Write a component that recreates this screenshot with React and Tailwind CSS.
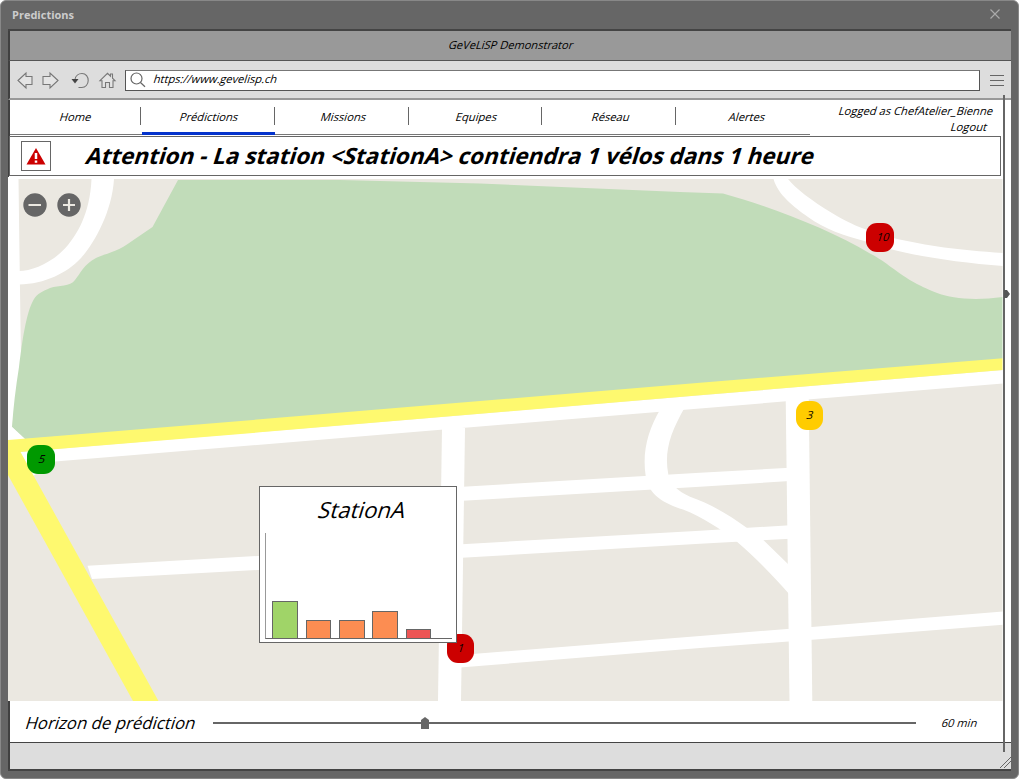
const slant = "inline-block whitespace-pre -skew-x-[17deg]";

function Tab({ label, active, last }) {
  return (
    <div className={`relative flex items-start justify-center pt-[8px] ${last ? "flex-1 pl-[5px]" : "w-[133.7px] pr-[2px]"}`}>
      <span className={`${slant} text-[11.2px] leading-[18px]`}>{label}</span>
      {!last && <span className="absolute right-[2.500px] top-[7px] h-[18px] w-px bg-[#666]" />}
      {active && <span className="absolute -bottom-px -left-[1.700px] h-[3px] w-[133px] bg-[#0433cc]" />}
    </div>
  );
}

const bikes = [
  { count: "10", place: "left-[858px] top-[45px] bg-[#cc0000] pl-[6px]" },
  { count: "3", place: "left-[787.5px] top-[223px] bg-[#ffcc00]" },
  { count: "5", place: "left-[19px] top-[266.5px] bg-[#009900]" },
  { count: "1", place: "left-[438.7px] top-[456px] bg-[#cc0000]" },
];

function Marker({ count, place }) {
  return (
    <div className={`absolute flex h-[29px] w-[27.5px] justify-center rounded-[11px] pt-[5px] text-[11.1px] leading-[18px] ${place}`}>
      <span className={slant}>{count}</span>
    </div>
  );
}

const bars = [
  "ml-[6px] h-[38px] w-[26px] bg-[#a0d468]",
  "ml-[8px] h-[19px] w-[25px] bg-[#fc8d52]",
  "ml-[8px] h-[19px] w-[26px] bg-[#fc8d52]",
  "ml-[7px] h-[28px] w-[26px] bg-[#fc8d52]",
  "ml-[8px] h-[10px] w-[25px] bg-[#ed5555]",
];

function Popup() {
  return (
    <div className="absolute left-[251px] top-[308px] flex h-[157px] w-[198px] flex-col items-center border border-[#666] bg-white">
      <span className={`${slant} ml-[8px] mt-[8px] text-[22.2px] leading-[30px]`}>StationA</span>
      <div className="mb-[3px] ml-[5px] mr-auto mt-auto flex h-[106px] w-[187px] items-end border-b border-l border-b-[#666] border-l-[#999]">
        {bars.map((b, i) => (
          <div key={i} className={`-mb-px border border-[#666] ${b}`} />
        ))}
      </div>
    </div>
  );
}

function CityMap() {
  return (
    <svg className="block" width="995" height="523" viewBox="8 178 995 523">
      <rect x="8" y="178" width="995" height="523" fill="#ebe8e1" />
      <g fill="#fff">
        <path d="M8 178H1003V179H18.5L20 290 21 360 12 427 24 439 8 441Z" />
        <path d="M91.500 179C90 215 76 235 68 245 54 262 33 271 19 271V284.500C45 284 67 273 81 258 93 245 112 213 114 179Z" />
        <path d="M773.500 179C778 195 794 207 808 217 824 229 845 236 866 241.500 895 253 950 262 1003 266V253C958 250 928 246 893 238 860 229 845 221 832 213 812 201 795 188 788 179Z" />
        <path d="M20 452 1003 370V383.500L55 461.500 33 476Z" />
        <path d="M442 428H465L461 701H438Z" />
        <path d="M785.700 398H808.700L812.300 701H789.500Z" />
        <path d="M463 486.700 700 472.700 790 467.700V481L700 486.700 463 500.700Z" />
        <path d="M462 544.200 700 530.700 790 525.200V538.700L700 543.700 462 557.800Z" />
        <path d="M87.500 565.700 262 555.700V569.700L92 579Z" />
        <path d="M460 655 700 636 790 628.700 1003 611.500V624.700L812 639.700 700 648 460 667.500Z" />
        <path d="M660.500 409C648 430 642 452 645.700 476 648 495 665 504 683 509.500 703 517 720 529 736.700 541.500 755 557 774 577 790 595V566L763.300 540C758 536 753 532 746.700 527.700 729 515 709 503 690 496.700 678 491 668 483 668.300 474.300 664 452 670 433 685 407Z" />
      </g>
      <path fill="#c1dcb9" d="M178 180 152.500 227 132 241C118 252 104 254 96 258 84 264 80 274 75 280 70 287 59 285 50 288 43 291 37 294 34 299 26 312 22 343 19 367Q14 398 12 427L25 439 1003 366V297C950 304 930 290 917 284 895 272 887 262 870 253.500 830 230 775 208 723 193.500L680 192 480 183.500 340 180Z" />
      <path fill="#fff" d="M12 427 25 439 8 441V427Z" />
      <path fill="#fef96f" d="M8 440 260 419.300 700 382.700 1003 358.300V370L700 395.200 260 432.300 20.500 452 158.500 701H133L8 475Z" />
      <path d="M1002.500 178V701" stroke="#fff" strokeOpacity=".5" />
    </svg>
  );
}

function ZoomButton({ plus }) {
  return (
    <svg width="24" height="24" viewBox="0 0 24 24">
      <circle cx="12" cy="12" r="11.700" fill="#666" />
      <path d={plus ? "M6 12H18M12 6V18" : "M5.500 12H18"} stroke="#ebe8e1" strokeWidth="2.200" />
    </svg>
  );
}

function Toolbar() {
  return (
    <div className="flex h-[40px] items-center border-b-2 border-l-2 border-b-[#999] border-l-[#404040] border-t border-t-[#555] bg-[#ddd]">
      <svg className="shrink-0" width="115" height="37" viewBox="10 61 115 37" fill="none" stroke="#777" strokeWidth="1.100">
        <g fill="#e4e4e4">
          <path d="M18 80.500 26 73V76.500H32V84.500H26V88Z" />
          <path d="M58 80.500 50 73V76.500H43V84.500H50V88Z" />
        </g>
        <path d="M75 79.500C75.500 76 78.500 73.500 82 73.500 86 73.500 88.200 77 88.200 80.500 88.200 84.500 85.500 87.500 81.800 87.500H78.500" />
        <path d="M71.500 79H78.500L75 83.500Z" fill="#444" stroke="none" />
        <path d="M100 80.700 107.500 73.300 110.500 76.200V74H112.500V78.200L115 80.700H113V87.500H109.500V82.500H105.500V87.500H102V80.700Z" fill="#e4e4e4" />
      </svg>
      <div className="mt-[2px] flex h-[21px] w-[855px] items-center border border-[#555] border-t-[#777] bg-white">
        <svg className="ml-[4px] -mt-px" width="16" height="16" viewBox="0 0 16 16" fill="none" stroke="#666" strokeWidth="1.200">
          <circle cx="6.500" cy="6.500" r="5.500" />
          <path d="M10.500 10.500 15 14.700" />
        </svg>
        <span className={`${slant} -mt-[3px] ml-[8px] text-[11.1px] leading-[18px]`}>https://www.gevelisp.ch</span>
      </div>
      <div className="ml-[10px] mt-[2px] flex w-[14px] flex-col gap-[4px]">
        <span className="h-px bg-[#666]" />
        <span className="h-px bg-[#666]" />
        <span className="h-px bg-[#666]" />
      </div>
    </div>
  );
}

export default function App() {
  return (
    <div className="relative flex h-[779px] w-[1019px] flex-col overflow-hidden rounded-[6px] border border-[#888] bg-[#666] font-['Open_Sans',sans-serif] text-black">
      <div className="flex h-[28px] items-center justify-between pl-[11px] pr-[18px] text-[#ccc]">
        <span className="text-[11px] font-bold leading-[18px]">Predictions</span>
        <svg className="-mt-[2px]" width="10" height="10" viewBox="0 0 10 10" stroke="#aaa" strokeWidth="1.200">
          <path d="M.5.500 9.500 9.500M9.500.500.500 9.500" />
        </svg>
      </div>
      <div className="ml-[7px] flex h-[742px] w-[1003px] shrink-0 flex-col border-b-2 border-t-2 border-[#444] bg-white">
        <div className="flex h-[29px] shrink-0 items-start justify-center border-l-2 border-[#404040] bg-[#999] pl-[2px] pt-[5px]">
          <span className={`${slant} text-[11.1px] leading-[18px]`}>GeVeLiSP Demonstrator</span>
        </div>
        <Toolbar />
        <div className="flex h-[36px] shrink-0 border-l-2 border-[#404040]">
          <div className="mb-px flex w-[800px] border-b border-[#777]">
            <Tab label="Home" />
            <Tab label="Prédictions" active />
            <Tab label="Missions" />
            <Tab label="Equipes" />
            <Tab label="Réseau" />
            <Tab label="Alertes" last />
          </div>
          <div className="ml-auto flex w-[182px] flex-col items-end pr-[18px] pt-[3px] text-[11.2px] leading-[16px]">
            <span className={slant}>Logged as ChefAtelier_Bienne</span>
            <span className={`${slant} mr-[6px]`}>Logout</span>
          </div>
        </div>
        <div className="flex h-[41px] border-l border-[#404040]">
          <div className="flex h-[40px] w-[992px] items-center border border-[#666]">
            <div className="ml-[11px] flex h-[30px] w-[30px] items-center justify-center border border-[#666]">
              <svg width="20" height="18" viewBox="0 0 20 18">
                <path d="M10 1 19.500 17.500H.500Z" fill="#cc0000" />
                <path d="M10 6V12M10 13.500V15.700" stroke="#fff" strokeWidth="2.500" />
              </svg>
            </div>
            <span className={`${slant} ml-[36px] text-[22.450px] font-bold leading-[30px]`}>
              {"Attention - La station <StationA> contiendra 1 vélos dans 1 heure"}
            </span>
          </div>
        </div>
        <div className="h-px" />
        <div className="relative h-[523px] w-[995px] shrink-0">
          <CityMap />
          <div className="absolute left-[15.3px] top-[15px] flex gap-[9.3px]">
            <ZoomButton />
            <ZoomButton plus />
          </div>
          {bikes.map((b) => (
            <Marker key={b.count} {...b} />
          ))}
          <Popup />
        </div>
        <div className="flex h-[41px] items-center border-l-2 border-[#404040] pl-[16px]">
          <span className={`${slant} mt-[2px] w-[171px] text-[16.800px] leading-[24px]`}>Horizon de prédiction</span>
          <div className="relative ml-[16px] mt-[3px] h-[2px] w-[703px] bg-[#666]">
            <svg className="absolute -top-[5px] left-[208px]" width="8" height="12" viewBox="0 0 8 12">
              <path d="M0 3 4 0 8 3V12H0Z" fill="#666" />
            </svg>
          </div>
          <span className={`${slant} ml-[26px] mt-[2px] text-[11.1px] leading-[18px]`}>60 min</span>
        </div>
        <div className="flex h-[27px] items-end justify-end border-l-2 border-t border-l-[#404040] border-t-[#444] bg-[#ddd]">
          <svg width="12" height="14" viewBox="0 0 12 14" stroke="#666">
            <path d="M1 13 12 2M5 13 12 6" />
          </svg>
        </div>
      </div>
      <div className="absolute left-[1002px] top-[94px] h-[657px] w-[2px] bg-[#666]">
        <svg className="absolute left-[1px] top-[195px]" width="6" height="8" viewBox="0 0 6 8">
          <path d="M0 0H3L6 4 3 8H0Z" fill="#555" />
        </svg>
      </div>
    </div>
  );
}
